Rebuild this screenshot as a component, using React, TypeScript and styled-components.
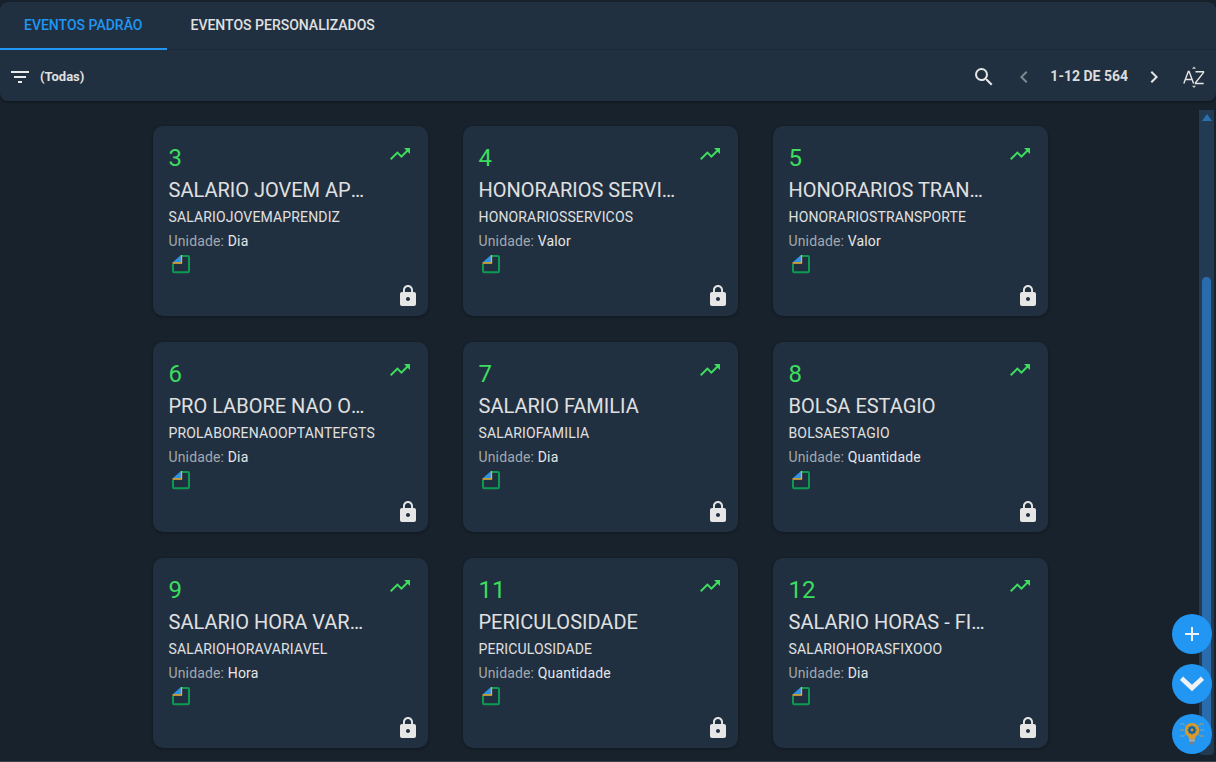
import React from "react";
import styled, { createGlobalStyle } from "styled-components";

const Global = createGlobalStyle`
  html, body { margin: 0; padding: 0; background: #18222c; height: 100%; overflow: hidden; }
  * { box-sizing: border-box; }
  #root { height: 762px; }
`;

const Page = styled.div`
  position: relative;
  width: 1216px;
  height: 762px;
  display: flex;
  flex-direction: column;
  padding-top: 2px;
  font-family: Roboto, "Liberation Sans", sans-serif;
  background: #18222c;
  border-bottom: 1px solid #3a4148;
  overflow: hidden;
`;

const Header = styled.header`
  flex: none;
  height: 99px;
  background: #203040;
  border-radius: 8px;
  box-shadow: 0 1px 3px rgba(0, 0, 0, 0.4);
`;

const TabBar = styled.nav`
  display: flex;
  height: 48px;
  border-bottom: 1px solid #1c2a38;
`;

const Tab = styled.div<{ $active?: boolean }>`
  height: 48px;
  padding: 0 24px;
  display: flex;
  align-items: center;
  font-size: 14px;
  font-weight: 500;
  white-space: nowrap;
  color: ${(p) => (p.$active ? "#2196f3" : "#e0e0e0")};
  border-bottom: 2px solid ${(p) => (p.$active ? "#2196f3" : "transparent")};
`;

const Toolbar = styled.div`
  height: 51px;
  display: flex;
  align-items: center;
  padding: 2px 10px 0 10px;
`;

const FilterLabel = styled.span`
  margin-left: 10px;
  font-size: 13px;
  font-weight: 700;
  color: #e0e0e0;
`;

const Spacer = styled.div`
  flex: 1;
`;

const ToolIcon = styled.span<{ $dim?: boolean; $gap?: number }>`
  display: flex;
  align-items: center;
  margin-left: ${(p) => p.$gap ?? 0}px;
  color: ${(p) => (p.$dim ? "#7f8992" : "#e6e6e6")};
`;

const PageLabel = styled.span`
  margin-left: 14px;
  margin-top: -2px;
  font-size: 14px;
  font-weight: 700;
  color: #dcdcdc;
`;

const Body = styled.div`
  flex: 1;
  min-height: 0;
  display: flex;
`;

const Main = styled.main`
  flex: 1;
  padding-top: 25px;
  display: flex;
  justify-content: center;
`;

const Grid = styled.div`
  display: grid;
  grid-template-columns: repeat(3, 275px);
  grid-auto-rows: 190px;
  column-gap: 35px;
  row-gap: 26px;
  margin-left: 1px;
`;

const Card = styled.article`
  position: relative;
  background: #203040;
  border-radius: 10px;
  padding: 18px 16px 0;
  box-shadow: 0 1px 3px rgba(0, 0, 0, 0.35);
`;

const Code = styled.div`
  font-size: 24px;
  line-height: 28px;
  color: #3ddc5f;
`;

const Title = styled.div`
  margin-top: 6px;
  max-width: 197px;
  font-size: 20px;
  line-height: 24px;
  color: #e0e0e0;
  white-space: nowrap;
  overflow: hidden;
  text-overflow: ellipsis;
`;

const Slug = styled.div`
  margin-top: 5px;
  font-size: 14px;
  line-height: 20px;
  letter-spacing: 0.15px;
  color: #e0e0e0;
`;

const Unit = styled.div`
  margin-top: 4px;
  font-size: 14px;
  line-height: 20px;
  letter-spacing: 0.15px;
  color: #a3a9af;
`;

const UnitValue = styled.span`
  color: #e6e6e6;
`;

const DocWrap = styled.div`
  margin: 3px 0 0 2px;
  height: 20px;
  display: flex;
`;

const TrendSlot = styled.span`
  position: absolute;
  top: 16px;
  right: 16px;
  display: flex;
`;

const LockSlot = styled.span`
  position: absolute;
  right: 8px;
  bottom: 8px;
  display: flex;
`;

const Scrollbar = styled.div`
  position: relative;
  flex: none;
  width: 15px;
  margin: 9px 2px 6px 0;
  background: #223a52;
  border-radius: 0 0 4px 4px;
`;

const ScrollArrow = styled.span`
  position: absolute;
  top: 4px;
  left: 3px;
  width: 0;
  height: 0;
  border-left: 5px solid transparent;
  border-right: 5px solid transparent;
  border-bottom: 7px solid #2a70b0;
`;

const ScrollThumb = styled.span`
  position: absolute;
  top: 167px;
  left: 3px;
  right: 3px;
  bottom: 9px;
  background: #2a6cab;
  border-radius: 5px;
`;

const Fabs = styled.div`
  position: absolute;
  right: 4px;
  bottom: 7px;
  display: flex;
  flex-direction: column;
  gap: 10px;
`;

const Fab = styled.button`
  width: 40px;
  height: 40px;
  padding: 0;
  border: 0;
  border-radius: 50%;
  background: #2196f3;
  color: #eef2f5;
  display: flex;
  align-items: center;
  justify-content: center;
`;

const FilterIcon = () => (
  <svg width="20" height="14" viewBox="0 0 20 14" fill="#eaeaea">
    <rect x="1" y="1" width="18" height="2" />
    <rect x="4" y="6" width="12" height="2" />
    <rect x="8" y="11" width="4" height="2" />
  </svg>
);

const Mat = ({ d, fill = "currentColor" }: { d: string; fill?: string }) => (
  <svg width="24" height="24" viewBox="0 0 24 24" fill={fill}>
    <path d={d} />
  </svg>
);

const SortIcon = () => (
  <svg width="24" height="24" viewBox="0 0 24 24" fill="none">
    <path d="M1.8 18.5 6.3 6.5h.8l4.5 12M3.4 14.5h6.6" stroke="#e6e6e6" strokeWidth="1.4" />
    <path d="M13.5 6.8h8v.8l-8 10.2v.7h8.2" stroke="#e6e6e6" strokeWidth="1.4" />
    <path d="M10 3.8 12 1.4 14 3.8zM10 20.8h4L12 23z" fill="#d0d0d0" />
  </svg>
);

const DocIcon = () => (
  <svg width="20" height="20" viewBox="0 0 20 20" fill="none">
    <path d="M11 2h5.8q1.2 0 1.2 1.2V17q0 1.2-1.2 1.2H3.2Q2 18.2 2 17V10" stroke="#0c9a52" strokeWidth="2" />
    <path d="M10 1v7.5H1.5z" fill="#2f92e4" />
    <path d="M10.5 1v8H1.5" stroke="#eeb02e" strokeWidth="1.3" />
  </svg>
);

const BulbIcon = () => (
  <svg width="26" height="26" viewBox="0 0 26 26" fill="none">
    <path d="M13 2a7.2 7.2 0 0 0-4.4 12.9c.9.8 1.2 1.6 1.4 3.6h6c.2-2 .5-2.8 1.4-3.6A7.2 7.2 0 0 0 13 2z" fill="#d9992c" />
    <circle cx="13" cy="9" r="2.6" stroke="#17679f" strokeWidth="2.4" />
    <path d="M13 4.6v1.6M13 11.8v1.6M8.6 9h1.6M15.8 9h1.6M9.9 5.9l1.1 1.1M15 11l1.1 1.1M16.1 5.9 15 7M11 11l-1.1 1.1" stroke="#17679f" strokeWidth="1.3" />
    <rect x="10.2" y="18.5" width="5.6" height="2.2" fill="#a8adb1" />
    <rect x="10.8" y="20.7" width="4.4" height="2.8" fill="#7c8387" />
    <path d="M1.5 3H5l2 2M1 9h4.5M1.5 15H5l2-2M24.5 3H21l-2 2M25 9h-4.5M24.5 15H21l-2-2" stroke="#dca547" strokeWidth="1" strokeDasharray="1.4 0.8" />
  </svg>
);

const PlusIcon = () => (
  <svg width="16" height="16" viewBox="0 0 16 16" fill="none">
    <path d="M8 1v14M1 8h14" stroke="#eef2f5" strokeWidth="2" />
  </svg>
);

const DownIcon = () => (
  <svg width="26" height="18" viewBox="0 0 26 18" fill="none">
    <path d="M2.5 3.2 13 13 23.5 3.2" stroke="#eef2f5" strokeWidth="4.6" />
  </svg>
);

const SEARCH = "M15.5 14h-.79l-.28-.27A6.471 6.471 0 0 0 16 9.5 6.5 6.5 0 1 0 9.5 16c1.61 0 3.09-.59 4.23-1.57l.27.28v.79l5 4.99L20.49 19l-4.99-5zm-6 0C7.01 14 5 11.99 5 9.5S7.01 5 9.5 5 14 7.01 14 9.5 11.99 14 9.5 14z";
const LEFT = "M15.41 16.59 10.83 12l4.58-4.59L14 6l-6 6 6 6z";
const RIGHT = "M8.59 16.59 13.17 12 8.59 7.41 10 6l6 6-6 6z";
const TREND = "M16 6l2.29 2.29-4.88 4.88-4-4L2 16.59 3.41 18l6-6 4 4 6.3-6.29L22 12V6z";
const LOCK = "M18 8h-1V6c0-2.76-2.24-5-5-5S7 3.24 7 6v2H6c-1.1 0-2 .9-2 2v10c0 1.1.9 2 2 2h12c1.1 0 2-.9 2-2V10c0-1.1-.9-2-2-2zm-6 9c-1.1 0-2-.9-2-2s.9-2 2-2 2 .9 2 2-.9 2-2 2zm3.1-9H8.9V6c0-1.71 1.39-3.1 3.1-3.1s3.1 1.39 3.1 3.1v2z";

const events = [
  { id: 3, title: "SALARIO JOVEM APRENDIZ", slug: "SALARIOJOVEMAPRENDIZ", unit: "Dia" },
  { id: 4, title: "HONORARIOS SERVICOS", slug: "HONORARIOSSERVICOS", unit: "Valor" },
  { id: 5, title: "HONORARIOS TRANSPORTE", slug: "HONORARIOSTRANSPORTE", unit: "Valor" },
  { id: 6, title: "PRO LABORE NAO OPTANTE FGTS", slug: "PROLABORENAOOPTANTEFGTS", unit: "Dia" },
  { id: 7, title: "SALARIO FAMILIA", slug: "SALARIOFAMILIA", unit: "Dia" },
  { id: 8, title: "BOLSA ESTAGIO", slug: "BOLSAESTAGIO", unit: "Quantidade" },
  { id: 9, title: "SALARIO HORA VARIAVEL", slug: "SALARIOHORAVARIAVEL", unit: "Hora" },
  { id: 11, title: "PERICULOSIDADE", slug: "PERICULOSIDADE", unit: "Quantidade" },
  { id: 12, title: "SALARIO HORAS - FIXO", slug: "SALARIOHORASFIXOOO", unit: "Dia" },
];

export default function App() {
  return (
    <Page>
      <Global />
      <Header>
        <TabBar>
          <Tab $active>EVENTOS PADRÃO</Tab>
          <Tab>EVENTOS PERSONALIZADOS</Tab>
        </TabBar>
        <Toolbar>
          <FilterIcon />
          <FilterLabel>(Todas)</FilterLabel>
          <Spacer />
          <ToolIcon><Mat d={SEARCH} /></ToolIcon>
          <ToolIcon $dim $gap={16}><Mat d={LEFT} /></ToolIcon>
          <PageLabel>1-12 DE 564</PageLabel>
          <ToolIcon $gap={14}><Mat d={RIGHT} /></ToolIcon>
          <ToolIcon $gap={16}><SortIcon /></ToolIcon>
        </Toolbar>
      </Header>
      <Body>
        <Main>
          <Grid>
            {events.map((e) => (
              <Card key={e.id}>
                <Code>{e.id}</Code>
                <Title>{e.title}</Title>
                <Slug>{e.slug}</Slug>
                <Unit>Unidade: <UnitValue>{e.unit}</UnitValue></Unit>
                <DocWrap><DocIcon /></DocWrap>
                <TrendSlot><Mat d={TREND} fill="#3ddc5f" /></TrendSlot>
                <LockSlot><Mat d={LOCK} fill="#e6e6e6" /></LockSlot>
              </Card>
            ))}
          </Grid>
        </Main>
        <Scrollbar>
          <ScrollArrow />
          <ScrollThumb />
        </Scrollbar>
      </Body>
      <Fabs>
        <Fab><PlusIcon /></Fab>
        <Fab><DownIcon /></Fab>
        <Fab><BulbIcon /></Fab>
      </Fabs>
    </Page>
  );
}
